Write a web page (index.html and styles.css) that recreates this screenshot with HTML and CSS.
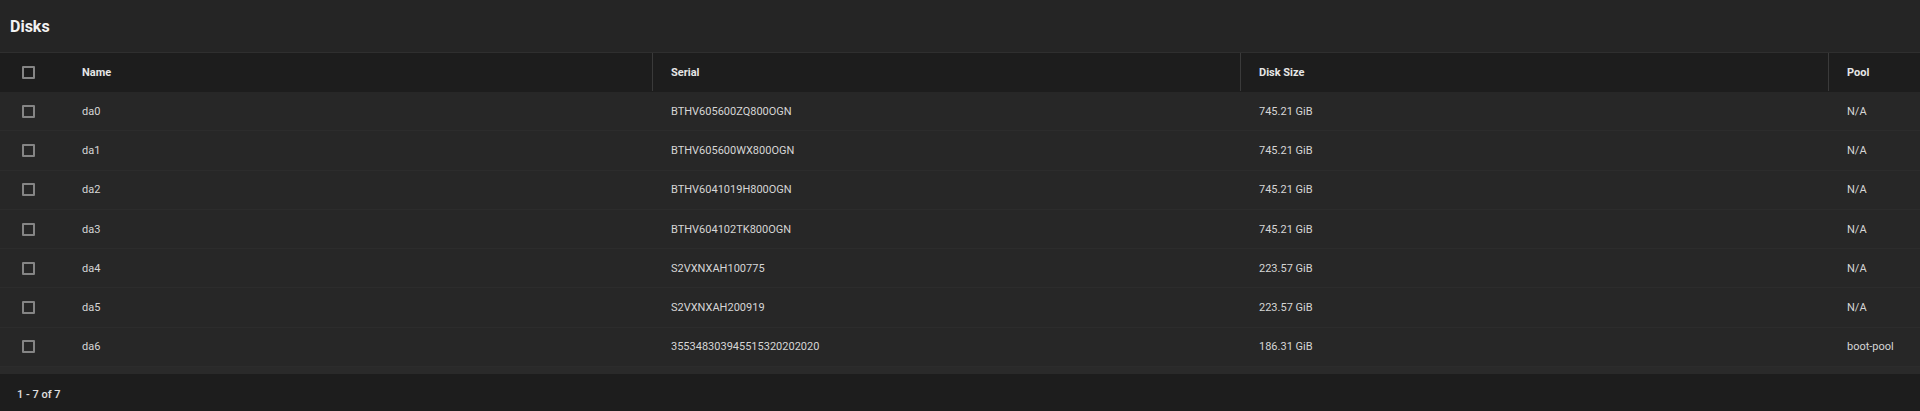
FILE: index.html
```html
<!DOCTYPE html>
<html>
<head>
  <title>Disks</title>
  <link rel="stylesheet" href="styles.css">
</head>
<body>
  <div class="panel">
    <div class="panel-title">Disks</div>

    <div class="disk-table">
      <div class="row head">
        <div class="cell check"><span class="box"></span></div>
        <div class="cell">Name</div>
        <div class="cell sep">Serial</div>
        <div class="cell sep">Disk Size</div>
        <div class="cell sep">Pool</div>
      </div>

      <div class="row">
        <div class="cell check"><span class="box"></span></div>
        <div class="cell">da0</div>
        <div class="cell">BTHV605600ZQ800OGN</div>
        <div class="cell">745.21 GiB</div>
        <div class="cell">N/A</div>
      </div>
      <div class="row">
        <div class="cell check"><span class="box"></span></div>
        <div class="cell">da1</div>
        <div class="cell">BTHV605600WX800OGN</div>
        <div class="cell">745.21 GiB</div>
        <div class="cell">N/A</div>
      </div>
      <div class="row">
        <div class="cell check"><span class="box"></span></div>
        <div class="cell">da2</div>
        <div class="cell">BTHV6041019H800OGN</div>
        <div class="cell">745.21 GiB</div>
        <div class="cell">N/A</div>
      </div>
      <div class="row">
        <div class="cell check"><span class="box"></span></div>
        <div class="cell">da3</div>
        <div class="cell">BTHV604102TK800OGN</div>
        <div class="cell">745.21 GiB</div>
        <div class="cell">N/A</div>
      </div>
      <div class="row">
        <div class="cell check"><span class="box"></span></div>
        <div class="cell">da4</div>
        <div class="cell">S2VXNXAH100775</div>
        <div class="cell">223.57 GiB</div>
        <div class="cell">N/A</div>
      </div>
      <div class="row">
        <div class="cell check"><span class="box"></span></div>
        <div class="cell">da5</div>
        <div class="cell">S2VXNXAH200919</div>
        <div class="cell">223.57 GiB</div>
        <div class="cell">N/A</div>
      </div>
      <div class="row">
        <div class="cell check"><span class="box"></span></div>
        <div class="cell">da6</div>
        <div class="cell">355348303945515320202020</div>
        <div class="cell">186.31 GiB</div>
        <div class="cell">boot-pool</div>
      </div>
    </div>

    <div class="scroll-track"></div>

    <div class="paginator">1 - 7 of 7</div>
  </div>
</body>
</html>
```

FILE: styles.css
```css
html, body {
  margin: 0;
  height: 100%;
  background: #252525;
}

body {
  font-family: Roboto, "Liberation Sans", Arial, sans-serif;
  color: #d6d6d6;
}

.panel {
  display: flex;
  flex-direction: column;
  height: 100%;
}

.panel-title {
  height: 52px;
  padding: 0 10px;
  display: flex;
  align-items: center;
  font-size: 16px;
  font-weight: 700;
  color: #f2f2f2;
  border-bottom: 1px solid #2f2f2f;
}

.disk-table {
  display: flex;
  flex-direction: column;
}

.row {
  display: grid;
  grid-template-columns: 64px 588px 588px 588px 1fr;
  height: 39.3px;
  box-sizing: border-box;
  border-bottom: 1px solid #2c2c2c;
  background: #272727;
  font-size: 11px;
}

.row.head {
  height: 39px;
  padding-bottom: 1px;
  background: #1d1d1d;
  border-bottom: none;
  font-weight: 700;
  color: #e6e6e6;
}

.cell {
  display: flex;
  align-items: center;
  padding-left: 18px;
  white-space: nowrap;
}

.row.head .cell.sep {
  border-left: 1px solid #3a3a3a;
  padding-left: 18px;
}

.row .cell:nth-child(n+3) {
  padding-left: 19px;
}

.cell.check {
  padding-left: 22px;
}

.box {
  width: 9px;
  height: 9px;
  border: 2px solid #858585;
  border-radius: 1px;
}

.scroll-track {
  height: 7px;
  background: #2a2a2a;
}

.paginator {
  flex: 1;
  display: flex;
  align-items: center;
  padding: 3px 0 0 17px;
  background: #1d1d1d;
  font-size: 11px;
  font-weight: 500;
  color: #e0e0e0;
}
```
